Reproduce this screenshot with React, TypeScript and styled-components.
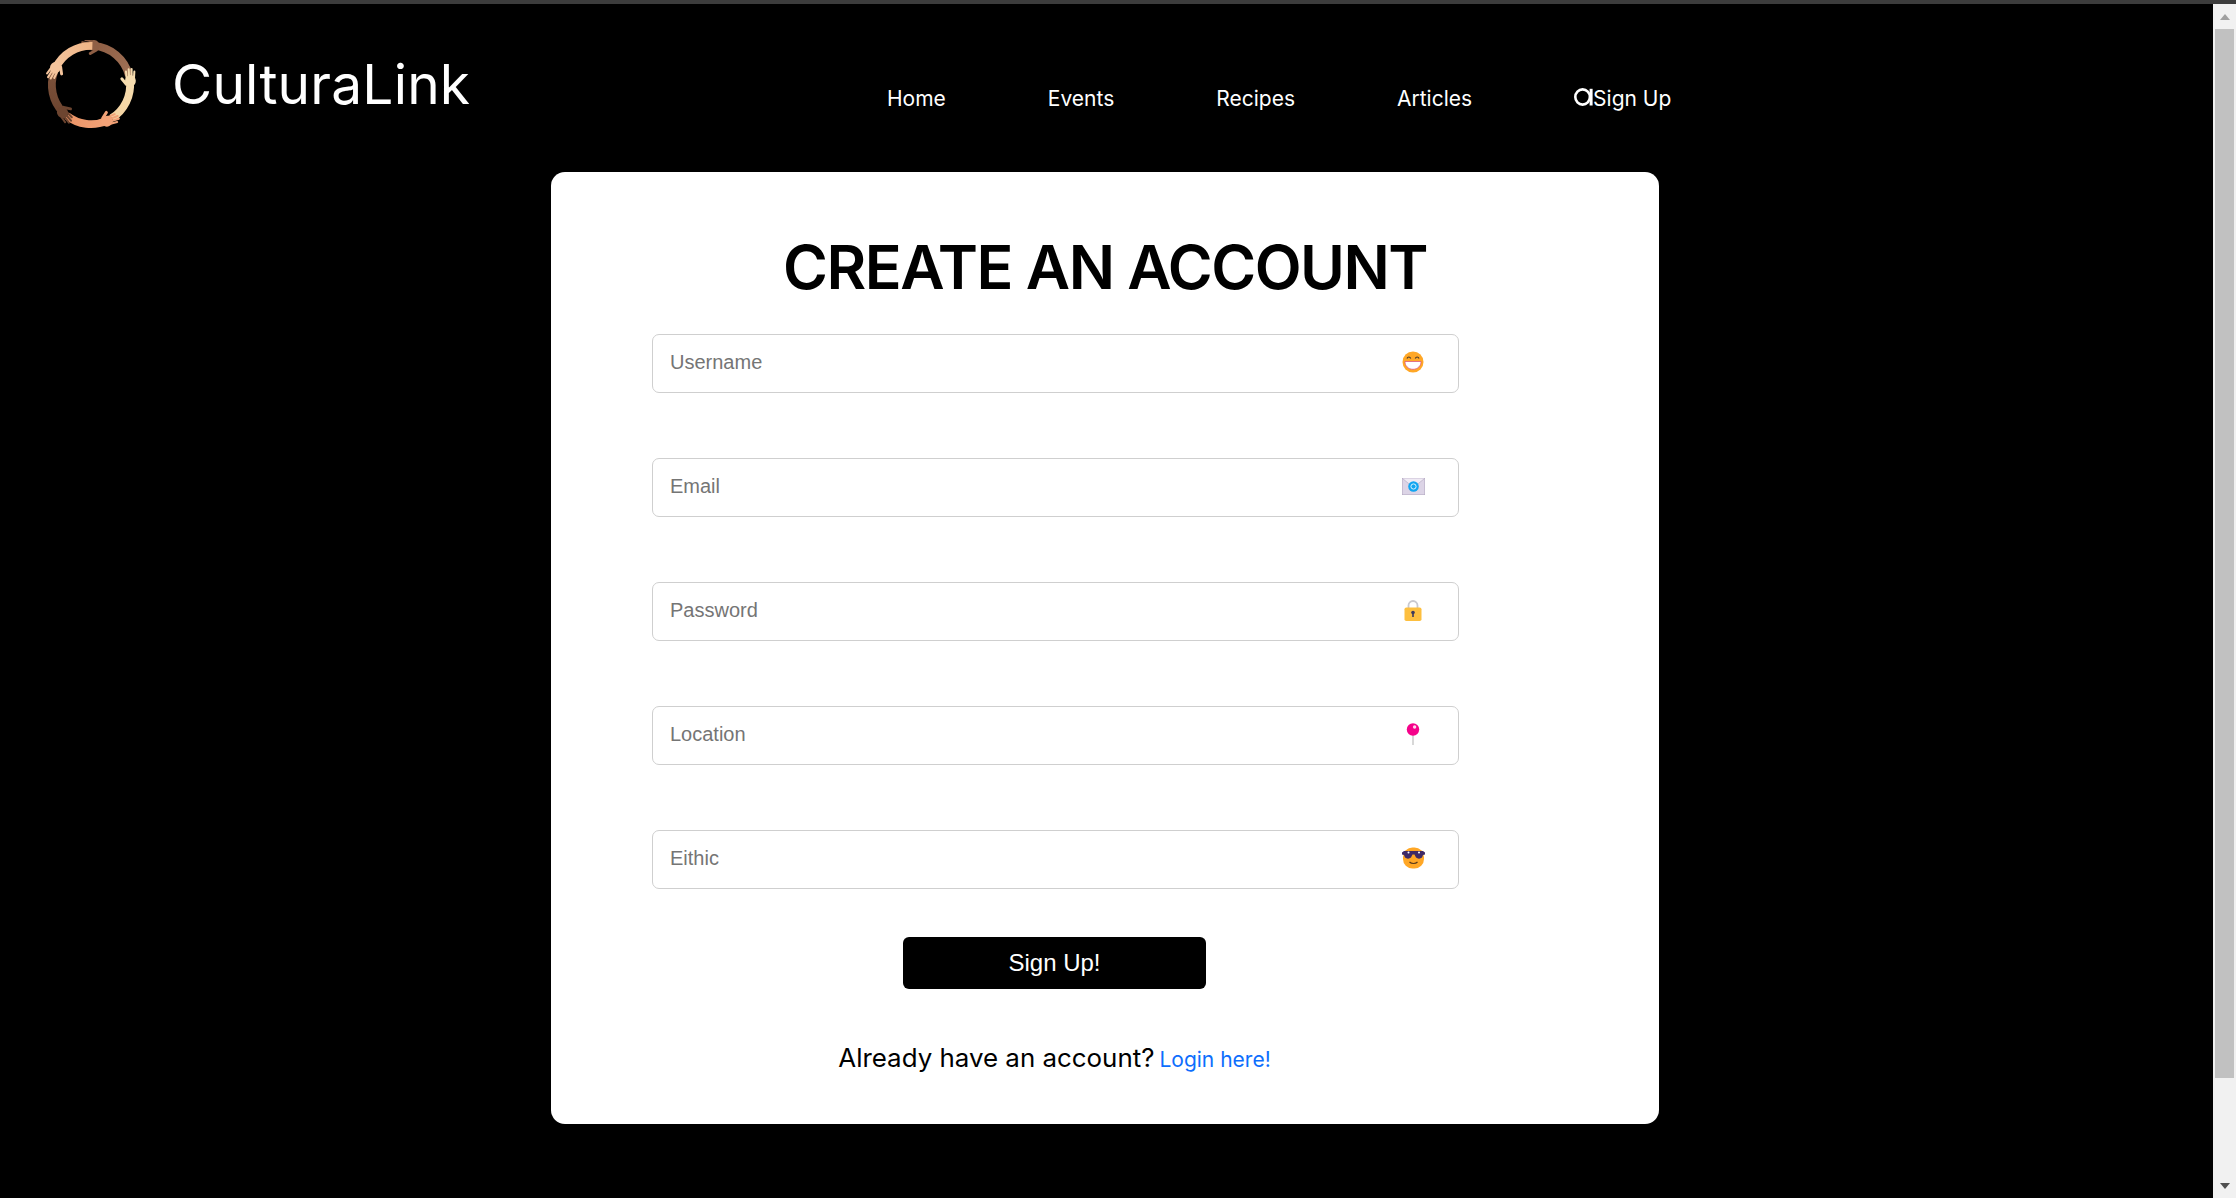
import React from "react";
import styled, { createGlobalStyle } from "styled-components";

const Global = createGlobalStyle`
  html, body { margin: 0; padding: 0; height: 100%; overflow: hidden; background: #000; }
  * { box-sizing: border-box; }
  input::placeholder { color: #757575; opacity: 1; }
`;

const Shell = styled.div`
  display: flex;
  flex-direction: column;
  width: 100%;
  height: 100vh;
  background: #000;
`;
const TopEdge = styled.div`
  height: 4px;
  flex: none;
  background: #3c3c3c;
`;
const Body = styled.div`
  flex: 1;
  display: flex;
  min-height: 0;
`;
const Page = styled.div`
  flex: 1;
  min-width: 0;
  display: flex;
  flex-direction: column;
`;
const Scrollbar = styled.div`
  width: 23px;
  flex: none;
  background: #f1f1f1;
  display: flex;
  flex-direction: column;
  align-items: center;
`;
const ArrowBox = styled.div`
  height: 25px;
  width: 100%;
  flex: none;
  display: flex;
  align-items: center;
  justify-content: center;
`;
const Thumb = styled.div`
  width: 19px;
  height: 1049px;
  flex: none;
  background: #c1c1c1;
`;
const Spacer = styled.div`
  flex: 1;
`;
const Header = styled.header`
  height: 168px;
  flex: none;
  display: flex;
  padding-left: 46px;
`;
const Brand = styled.div`
  display: flex;
  align-items: flex-start;
  padding-top: 36px;
  gap: 36px;
  width: 841px;
  flex: none;
`;
const BrandName = styled.div`
  font-family: Inter, "Liberation Sans", sans-serif;
  font-size: 55px;
  font-weight: 400;
  letter-spacing: 0.2px;
  line-height: 60px;
  color: #fff;
  margin-top: 14px;
`;
const Nav = styled.nav`
  display: flex;
  align-items: center;
  height: 60px;
  margin-top: 65px;
  gap: 102px;
`;
const NavLink = styled.a`
  display: flex;
  align-items: center;
  font-family: Inter, "Liberation Sans", sans-serif;
  font-size: 21px;
  font-weight: 400;
  color: #fff;
  line-height: 28px;
  white-space: nowrap;
`;
const Main = styled.main`
  display: flex;
  justify-content: center;
  padding-right: 3px;
`;
const Card = styled.section`
  width: 1108px;
  height: 952px;
  background: #fff;
  border-radius: 14px;
  padding: 56px 0 0 101px;
  display: flex;
  flex-direction: column;
  align-items: flex-start;
`;
const Title = styled.h1`
  margin: 0 0 0 -101px;
  width: 1108px;
  text-align: center;
  font-family: Inter, "Liberation Sans", sans-serif;
  font-size: 61px;
  font-weight: 600;
  letter-spacing: -1.5px;
  line-height: 78px;
  color: #000;
`;
const Form = styled.form`
  width: 807px;
  margin-top: 28px;
  display: flex;
  flex-direction: column;
  align-items: center;
`;
const Field = styled.div`
  position: relative;
  width: 100%;
  height: 59px;
  margin-bottom: 65px;
  &:last-of-type { margin-bottom: 0; }
`;
const Input = styled.input`
  width: 100%;
  height: 100%;
  border: 1.5px solid #cfcfcf;
  border-radius: 7px;
  padding: 0 17px 3px;
  font-family: "Liberation Sans", Arial, sans-serif;
  font-size: 20px;
  background: #fff;
  outline: none;
`;
const FieldIcon = styled.span`
  position: absolute;
  left: 746px;
  top: 13px;
  width: 30px;
  height: 30px;
  display: flex;
  align-items: center;
  justify-content: center;
`;
const Submit = styled.button`
  margin: 48px 2px 0 0;
  width: 303px;
  height: 52px;
  border: 0;
  border-radius: 6px;
  background: #000;
  color: #fff;
  font-family: "Liberation Sans", Arial, sans-serif;
  font-size: 24px;
  padding: 0;
`;
const Footer = styled.p`
  margin: 51px 2px 0 0;
  font-family: Inter, "Liberation Sans", sans-serif;
  font-size: 25.9px;
  line-height: 36px;
  color: #000;
  white-space: nowrap;
`;
const LoginLink = styled.a`
  color: #0d6efd;
  font-size: 21px;
  text-decoration: none;
  margin-left: 5px;
`;

const arms = [
  { r: 4, len: 72, a: "#8f5f45", b: "#a4755a" },
  { r: 84, len: 64, a: "#f6dcae", b: "#f3cf9c" },
  { r: 156, len: 62, a: "#f2a277", b: "#e88e5f" },
  { r: 226, len: 64, a: "#6d4530", b: "#83573f" },
  { r: 296, len: 66, a: "#f4c49c", b: "#eeb07f" },
];

function Logo() {
  const R = 40;
  return (
    <svg width="90" height="90" viewBox="-46 -46 92 92" style={{ flex: "none" }}>
      <defs>
        {arms.map((arm, i) => (
          <linearGradient key={i} id={`arm${i}`} gradientUnits="userSpaceOnUse" x1="0" y1={-R} x2={R} y2={0}>
            <stop offset="0" stopColor={arm.a} />
            <stop offset="1" stopColor={arm.b} />
          </linearGradient>
        ))}
      </defs>
      {arms.map((arm, i) => {
        const t = (arm.len * Math.PI) / 180;
        const ex = R * Math.sin(t);
        const ey = -R * Math.cos(t);
        return (
          <g key={i} transform={`rotate(${arm.r})`}>
            <path d={`M0 ${-R} A${R} ${R} 0 0 1 ${ex} ${ey}`} fill="none" stroke={`url(#arm${i})`} strokeWidth="8" />
            <g stroke={arm.a} strokeLinecap="round" fill="none">
              <path d="M-3 -44.500 L-9 -45.500" strokeWidth="2.100" />
              <path d="M-3 -42 L-12 -43" strokeWidth="2.100" />
              <path d="M-3 -39.500 L-12 -40" strokeWidth="2.100" />
              <path d="M-3 -37 L-10 -37" strokeWidth="2.100" />
              <path d="M3 -36 L-3 -32" strokeWidth="3" />
            </g>
            <ellipse cx="0" cy="-40.500" rx="6" ry="5.500" fill={arm.a} />
          </g>
        );
      })}
    </svg>
  );
}

const Grin = () => (
  <svg width="22" height="22" viewBox="0 0 22 22">
    <circle cx="11" cy="11" r="10.500" fill="#ffa726" />
    <path d="M3 10.500h16c.3 4-3.200 7.800-8 7.800s-8.300-3.800-8-7.800z" fill="#fff" stroke="#d6487f" strokeWidth="0.700" />
    <path d="M5 7.500c.8-2 2.900-2 3.700 0M13.300 7.500c.8-2 2.900-2 3.700 0" stroke="#4a3a2c" strokeWidth="1.200" fill="none" />
  </svg>
);
const Mail = () => (
  <svg width="23" height="17" viewBox="0 0 23 17">
    <rect x="0.300" y="0.300" width="22.400" height="16.400" fill="#dcd4e6" stroke="#b1a6c0" strokeWidth="0.600" />
    <path d="M0.500 .5L11.500 9.500 22.500 .5" fill="#efeaf4" stroke="#b1a6c0" strokeWidth="0.600" />
    <circle cx="11.500" cy="8.500" r="5.300" fill="#12a5f0" />
    <circle cx="11.500" cy="8.500" r="2.600" fill="none" stroke="#d9f3ff" strokeWidth="1" />
  </svg>
);
const Lock = () => (
  <svg width="18" height="21" viewBox="0 0 18 21">
    <path d="M4.500 9V5.500a4.500 4.500 0 0 1 9 0V9" fill="none" stroke="#c9c9cf" strokeWidth="1.800" />
    <rect x="0.500" y="7.500" width="17" height="13.500" rx="1.800" fill="#fdbf3f" />
    <circle cx="9" cy="12.500" r="1.800" fill="#3c3a5e" />
    <rect x="8.200" y="13" width="1.600" height="4" fill="#3c3a5e" />
  </svg>
);
const Pin = () => (
  <svg width="14" height="22" viewBox="0 0 14 22">
    <rect x="6.200" y="10" width="1.600" height="12" fill="#cfcfcf" />
    <circle cx="7" cy="6.500" r="6.200" fill="#f5028a" />
    <circle cx="8.600" cy="4" r="1.700" fill="#ffd6ec" />
  </svg>
);
const Cool = () => (
  <svg width="23" height="22" viewBox="0 0 23 22">
    <rect x="1" y="0.500" width="21" height="21" rx="9.500" fill="#ffa726" />
    <path d="M0 5.500l2-1.500h19l2 1.500v2l-2 .5-1 2.500c-1.500 1.500-4.500 1.500-6 0l-1.500-3h-2l-1.500 3c-1.500 1.500-4.500 1.500-6 0L2 8 0 7.500z" fill="#3f2a66" />
    <circle cx="6.500" cy="5.500" r="1" fill="#fff" />
    <circle cx="17" cy="5.500" r="1" fill="#fff" />
    <path d="M7.500 15c2 2 6 2 8 0" fill="none" stroke="#5a3a1a" strokeWidth="1.200" />
  </svg>
);
const SingleStoryA = () => (
  <svg width="19" height="18" viewBox="0 0 19 18" style={{ flex: "none", marginTop: -4 }}>
    <ellipse cx="8.600" cy="9" rx="7.300" ry="7.600" fill="none" stroke="#fff" strokeWidth="2.600" />
    <rect x="15.600" y="0.800" width="3" height="16.700" fill="#fff" />
  </svg>
);

const fields = [
  { name: "Username", icon: <Grin /> },
  { name: "Email", icon: <Mail /> },
  { name: "Password", icon: <Lock /> },
  { name: "Location", icon: <Pin /> },
  { name: "Eithic", icon: <Cool /> },
];

export default function App() {
  return (
    <Shell>
      <Global />
      <TopEdge />
      <Body>
        <Page>
          <Header>
            <Brand>
              <Logo />
              <BrandName>CulturaLink</BrandName>
            </Brand>
            <Nav>
              <NavLink>Home</NavLink>
              <NavLink>Events</NavLink>
              <NavLink>Recipes</NavLink>
              <NavLink>Articles</NavLink>
              <NavLink><SingleStoryA />Sign Up</NavLink>
            </Nav>
          </Header>
          <Main>
            <Card>
              <Title>CREATE AN ACCOUNT</Title>
              <Form onSubmit={(e) => e.preventDefault()}>
                {fields.map((f) => (
                  <Field key={f.name}>
                    <Input placeholder={f.name} />
                    <FieldIcon>{f.icon}</FieldIcon>
                  </Field>
                ))}
                <Submit>Sign Up!</Submit>
                <Footer>
                  Already have an account?<LoginLink>Login here!</LoginLink>
                </Footer>
              </Form>
            </Card>
          </Main>
        </Page>
        <Scrollbar>
          <ArrowBox>
            <svg width="10" height="6" viewBox="0 0 10 6"><path d="M5 0l5 6H0z" fill="#a0a0a0" /></svg>
          </ArrowBox>
          <Thumb />
          <Spacer />
          <ArrowBox>
            <svg width="10" height="6" viewBox="0 0 10 6"><path d="M0 0h10L5 6z" fill="#505050" /></svg>
          </ArrowBox>
        </Scrollbar>
      </Body>
    </Shell>
  );
}
